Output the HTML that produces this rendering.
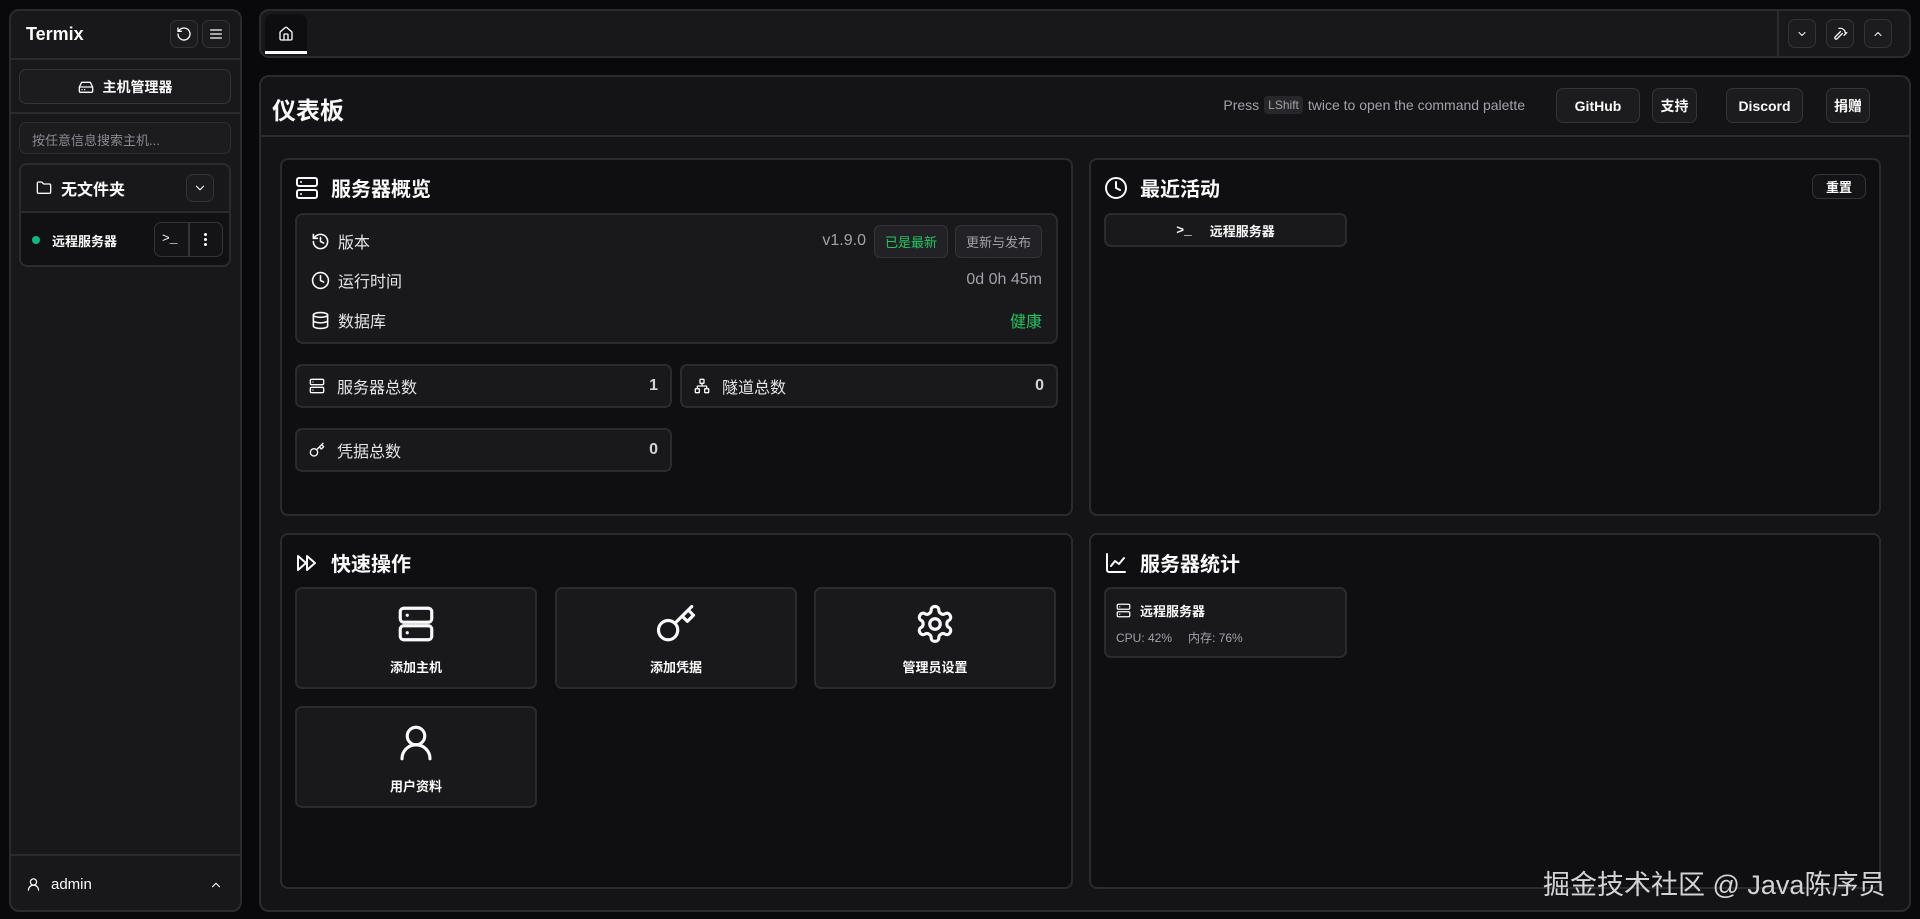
<!DOCTYPE html>
<html><head><meta charset="utf-8"><style>
*{box-sizing:border-box;margin:0;padding:0}
body{width:1920px;height:919px;background:#09090b;font-family:"Liberation Sans","Noto Sans CJK SC",sans-serif;color:#fafafa;position:relative;overflow:hidden}
.a{position:absolute}
.bx{position:absolute;border:2px solid #2b2b2f;border-radius:8px}
.btn{position:absolute;border:1.5px solid #333338;border-radius:7px;background:#1c1c1f;display:flex;align-items:center;justify-content:center;font-weight:700;font-size:14px}
svg{fill:none;stroke:#fafafa;stroke-width:2;stroke-linecap:round;stroke-linejoin:round}
.row{position:absolute;left:14px;right:14px;display:flex;align-items:center;font-size:16px;color:#e4e4e7}
.row svg{width:19px;height:19px;margin-right:8px}
.stat{position:absolute;background:#19191c;border:2px solid #2b2b2f;border-radius:7px;display:flex;align-items:center;padding:0 12px;font-size:16px;color:#e4e4e7}
.stat svg{width:16px;height:16px;margin-right:12px}
.stat b{margin-left:auto;color:#d4d4d8}
.qa{position:absolute;background:#19191c;border:2px solid #2b2b2f;border-radius:7px;width:242px;height:102px;text-align:center;font-size:13px;font-weight:700}
.qa svg{position:absolute;left:50%;top:14px;margin-left:-21px;width:42px;height:42px;stroke-width:1.8}
.qa span{position:absolute;left:0;right:0;top:68px}
.ct{position:absolute;font-size:20px;font-weight:700;display:flex;align-items:center}
.ct svg{width:24px;height:24px;margin-right:12px}
</style></head><body>

<!-- sidebar -->
<div class="bx" style="left:9px;top:9px;width:233px;height:903px;background:#18181b;border-radius:10px"></div>
<div class="a" style="left:26px;top:24px;font-size:18px;font-weight:700">Termix</div>
<div class="btn" style="left:170px;top:20px;width:28px;height:28px"><svg width="16" height="16" viewBox="0 0 24 24"><path d="M3 12a9 9 0 1 0 3-6.7L3 8"/><path d="M3 3v5h5"/></svg></div>
<div class="btn" style="left:202px;top:20px;width:28px;height:28px"><svg width="16" height="16" viewBox="0 0 24 24"><path d="M4 6h16M4 12h16M4 18h16"/></svg></div>
<div class="a" style="left:10px;top:58px;width:231px;height:2px;background:#2b2b2f"></div>
<div class="btn" style="left:19px;top:69px;width:212px;height:35px;font-size:14px"><svg width="16" height="16" viewBox="0 0 24 24" style="margin-right:9px"><path d="M22 12H2M5.5 5h13L22 12v6a2 2 0 0 1-2 2H4a2 2 0 0 1-2-2v-6z"/><path d="M6 16h.01M10 16h.01"/></svg>主机管理器</div>
<div class="a" style="left:10px;top:112px;width:231px;height:2px;background:#2b2b2f"></div>
<div class="a" style="left:19px;top:122px;width:212px;height:32px;border:1.5px solid #2e2e33;border-radius:7px;background:#1c1c1f;font-size:13px;color:#8a8a90;padding:7px 12px">按任意信息搜索主机...</div>
<div class="bx" style="left:19px;top:163px;width:212px;height:104px;background:#18181b"></div>
<div class="a" style="left:36px;top:176px;font-size:16px;font-weight:700;display:flex;align-items:center"><svg width="16" height="16" viewBox="0 0 24 24" style="margin-right:9px"><path d="M20 20a2 2 0 0 0 2-2V8a2 2 0 0 0-2-2h-7.9a2 2 0 0 1-1.7-.9l-.8-1.2A2 2 0 0 0 7.9 3H4a2 2 0 0 0-2 2v13a2 2 0 0 0 2 2z"/></svg>无文件夹</div>
<div class="btn" style="left:186px;top:174px;width:28px;height:28px"><svg width="14" height="14" viewBox="0 0 24 24"><path d="M6 9l6 6 6-6"/></svg></div>
<div class="a" style="left:21px;top:211px;width:208px;height:54px;background:#111113;border-top:2px solid #2b2b2f;border-radius:0 0 7px 7px"></div>
<div class="a" style="left:32px;top:236px;width:8px;height:8px;border-radius:50%;background:#10b981"></div>
<div class="a" style="left:52px;top:231px;font-size:13px;font-weight:700">远程服务器</div>
<div class="a" style="left:154px;top:222px;width:69px;height:35px;border:1.5px solid #333338;border-radius:7px;background:#141416"></div>
<div class="a" style="left:188px;top:223px;width:1.5px;height:33px;background:#333338"></div>
<div class="a" style="left:162px;top:231px;font-size:13px;font-family:'Liberation Mono',monospace">&gt;_</div>
<div class="a" style="left:204px;top:233px;width:3px;height:3px;background:#fff;border-radius:50%;box-shadow:0 5px 0 #fff,0 10px 0 #fff"></div>
<div class="a" style="left:10px;top:854px;width:231px;height:2px;background:#2b2b2f"></div>
<div class="a" style="left:26px;top:876px;font-size:15px;display:flex;align-items:center"><svg width="15" height="15" viewBox="0 0 24 24" style="margin-right:10px"><circle cx="12" cy="8" r="5"/><path d="M20 21a8 8 0 0 0-16 0"/></svg>admin</div>
<svg class="a" style="left:209px;top:878px" width="14" height="14" viewBox="0 0 24 24"><path d="M18 15l-6-6-6 6"/></svg>

<!-- tab bar -->
<div class="bx" style="left:259px;top:9px;width:1652px;height:49px;background:#18181b;border-radius:10px"></div>
<div class="a" style="left:265px;top:14px;width:42px;height:40px;background:#0e0e10;border-radius:8px 8px 0 0;border-bottom:3px solid #fafafa"></div>
<svg class="a" style="left:278px;top:26px" width="16" height="16" viewBox="0 0 24 24"><path d="M15 21v-8a1 1 0 0 0-1-1h-4a1 1 0 0 0-1 1v8"/><path d="M3 10a2 2 0 0 1 .7-1.5l7-6a2 2 0 0 1 2.6 0l7 6A2 2 0 0 1 21 10v9a2 2 0 0 1-2 2H5a2 2 0 0 1-2-2z"/></svg>
<div class="a" style="left:1777px;top:10px;width:2px;height:47px;background:#2b2b2f"></div>
<div class="btn" style="left:1788px;top:19px;width:28px;height:29px"><svg width="12" height="12" viewBox="0 0 24 24"><path d="M6 9l6 6 6-6"/></svg></div>
<div class="btn" style="left:1826px;top:19px;width:28px;height:29px"><svg width="15" height="15" viewBox="0 0 24 24"><path d="M15 12l-8.4 8.4a2.1 2.1 0 0 1-3-3L12 9"/><path d="M17.6 15L22 10.6M20.9 11.8l-1.2-1.2a2 2 0 0 1-.6-1.4V7.9l-2.4-2.4a6 6 0 0 0-4.2-1.8H9.4"/></svg></div>
<div class="btn" style="left:1864px;top:19px;width:28px;height:29px"><svg width="12" height="12" viewBox="0 0 24 24"><path d="M18 15l-6-6-6 6"/></svg></div>

<!-- main panel -->
<div class="bx" style="left:259px;top:75px;width:1652px;height:837px;background:#141416;border-radius:10px"></div>
<div class="a" style="left:272px;top:91px;font-size:24px;font-weight:700">仪表板</div>
<div class="a" style="left:260px;top:135px;width:1650px;height:2px;background:#2b2b2f"></div>
<div class="a" style="left:1202px;top:96px;width:323px;font-size:14px;color:#a1a1aa;display:flex;align-items:center;justify-content:flex-end;white-space:nowrap">Press<span style="background:#27272a;border-radius:4px;padding:2px 4px;margin:0 5px;font-size:12px">LShift</span>twice to open the command palette</div>
<div class="btn" style="left:1556px;top:88px;width:84px;height:35px">GitHub</div>
<div class="btn" style="left:1652px;top:88px;width:45px;height:35px">支持</div>
<div class="btn" style="left:1726px;top:88px;width:77px;height:35px">Discord</div>
<div class="btn" style="left:1826px;top:88px;width:44px;height:35px">捐赠</div>

<!-- overview card -->
<div class="bx" style="left:280px;top:158px;width:793px;height:358px;background:#0f0f11"></div>
<div class="ct" style="left:295px;top:173px"><svg viewBox="0 0 24 24"><rect x="2" y="2" width="20" height="8" rx="2"/><rect x="2" y="14" width="20" height="8" rx="2"/><path d="M6 6h.01M6 18h.01"/></svg>服务器概览</div>
<div class="a" style="left:295px;top:213px;width:763px;height:131px;background:#19191c;border:2px solid #2b2b2f;border-radius:8px">
 <div class="row" style="top:11px;height:30px"><svg viewBox="0 0 24 24"><path d="M3 12a9 9 0 1 0 9-9 9.8 9.8 0 0 0-6.7 2.7L3 8"/><path d="M3 3v5h5M12 7v5l4 2"/></svg>版本
  <span style="margin-left:auto;color:#a1a1aa">v1.9.0</span>
  <span style="margin-left:8px;border:1.5px solid #333338;border-radius:6px;background:#222226;color:#22c55e;font-size:13px;padding:6px 10px">已是最新</span>
  <span style="margin-left:7px;border:1.5px solid #333338;border-radius:6px;background:#222226;color:#a1a1aa;font-size:13px;padding:6px 10px">更新与发布</span></div>
 <div class="row" style="top:50px;height:30px"><svg viewBox="0 0 24 24"><circle cx="12" cy="12" r="10"/><path d="M12 6v6l4 2"/></svg>运行时间<span style="margin-left:auto;color:#a1a1aa">0d 0h 45m</span></div>
 <div class="row" style="top:90px;height:30px"><svg viewBox="0 0 24 24"><ellipse cx="12" cy="5" rx="9" ry="3"/><path d="M3 5v14a9 3 0 0 0 18 0V5M3 12a9 3 0 0 0 18 0"/></svg>数据库<span style="margin-left:auto;color:#22c55e">健康</span></div>
</div>
<div class="stat" style="left:295px;top:364px;width:377px;height:44px"><svg viewBox="0 0 24 24"><rect x="2" y="2" width="20" height="8" rx="2"/><rect x="2" y="14" width="20" height="8" rx="2"/><path d="M6 6h.01M6 18h.01"/></svg>服务器总数<b>1</b></div>
<div class="stat" style="left:680px;top:364px;width:378px;height:44px"><svg viewBox="0 0 24 24"><rect x="16" y="16" width="6" height="6" rx="1"/><rect x="2" y="16" width="6" height="6" rx="1"/><rect x="9" y="2" width="6" height="6" rx="1"/><path d="M5 16v-3a1 1 0 0 1 1-1h12a1 1 0 0 1 1 1v3M12 12V8"/></svg>隧道总数<b>0</b></div>
<div class="stat" style="left:295px;top:428px;width:377px;height:44px"><svg viewBox="0 0 24 24"><circle cx="7.5" cy="15.5" r="5.5"/><path d="M21 2l-9.6 9.6M15.5 7.5l3 3L22 7l-3-3"/></svg>凭据总数<b>0</b></div>

<!-- recent activity -->
<div class="bx" style="left:1089px;top:158px;width:792px;height:358px;background:#0f0f11"></div>
<div class="ct" style="left:1104px;top:173px"><svg viewBox="0 0 24 24"><circle cx="12" cy="12" r="10"/><path d="M12 6v6l4 2"/></svg>最近活动</div>
<div class="btn" style="left:1812px;top:174px;width:54px;height:25px;font-size:13px;background:#141416">重置</div>
<div class="a" style="left:1104px;top:213px;width:243px;height:34px;background:#19191c;border:2px solid #2b2b2f;border-radius:7px;font-size:13px;font-weight:700;display:flex;align-items:center;justify-content:center"><span style="font-family:'Liberation Mono',monospace;margin-right:18px">&gt;_</span>远程服务器</div>

<!-- quick ops -->
<div class="bx" style="left:280px;top:533px;width:793px;height:356px;background:#0f0f11"></div>
<div class="ct" style="left:295px;top:548px"><svg viewBox="0 0 24 24"><path d="M3 5v14l8-7zM12 5v14l8-7z"/></svg>快速操作</div>
<div class="qa" style="left:295px;top:587px"><svg viewBox="0 0 24 24"><rect x="3" y="3" width="18" height="8" rx="2"/><rect x="3" y="13" width="18" height="8" rx="2"/><path d="M7 7h.01M7 17h.01"/></svg><span>添加主机</span></div>
<div class="qa" style="left:555px;top:587px"><svg viewBox="0 0 24 24"><circle cx="7.5" cy="15.5" r="5.5"/><path d="M21 2l-9.6 9.6M15.5 7.5l3 3L22 7l-3-3"/></svg><span>添加凭据</span></div>
<div class="qa" style="left:814px;top:587px"><svg viewBox="0 0 24 24"><path d="M12.2 2h-.4a2 2 0 0 0-2 2v.2a2 2 0 0 1-1 1.7l-.4.3a2 2 0 0 1-2 0l-.2-.1a2 2 0 0 0-2.7.7l-.2.4a2 2 0 0 0 .7 2.7l.2.1a2 2 0 0 1 1 1.7v.5a2 2 0 0 1-1 1.7l-.2.1a2 2 0 0 0-.7 2.7l.2.4a2 2 0 0 0 2.7.7l.2-.1a2 2 0 0 1 2 0l.4.3a2 2 0 0 1 1 1.7v.2a2 2 0 0 0 2 2h.4a2 2 0 0 0 2-2v-.2a2 2 0 0 1 1-1.7l.4-.3a2 2 0 0 1 2 0l.2.1a2 2 0 0 0 2.7-.7l.2-.4a2 2 0 0 0-.7-2.7l-.2-.1a2 2 0 0 1-1-1.7v-.5a2 2 0 0 1 1-1.7l.2-.1a2 2 0 0 0 .7-2.7l-.2-.4a2 2 0 0 0-2.7-.7l-.2.1a2 2 0 0 1-2 0l-.4-.3a2 2 0 0 1-1-1.7V4a2 2 0 0 0-2-2z"/><circle cx="12" cy="12" r="3"/></svg><span>管理员设置</span></div>
<div class="qa" style="left:295px;top:706px"><svg viewBox="0 0 24 24"><circle cx="12" cy="8" r="5"/><path d="M20 21a8 8 0 0 0-16 0"/></svg><span>用户资料</span></div>

<!-- server stats -->
<div class="bx" style="left:1089px;top:533px;width:792px;height:356px;background:#0f0f11"></div>
<div class="ct" style="left:1104px;top:548px"><svg viewBox="0 0 24 24"><path d="M3 3v16a2 2 0 0 0 2 2h16"/><path d="M7 15l4-5 4 3 5-6"/></svg>服务器统计</div>
<div class="a" style="left:1104px;top:587px;width:243px;height:71px;background:#19191c;border:2px solid #2b2b2f;border-radius:7px">
 <div style="position:absolute;left:10px;top:12px;font-size:13px;font-weight:700;display:flex;align-items:center"><svg width="15" height="15" viewBox="0 0 24 24" style="margin-right:9px"><rect x="2" y="2" width="20" height="8" rx="2"/><rect x="2" y="14" width="20" height="8" rx="2"/><path d="M6 6h.01M6 18h.01"/></svg>远程服务器</div>
 <div style="position:absolute;left:10px;top:40px;font-size:12px;color:#a1a1aa">CPU: 42%<span style="margin-left:16px">内存: 76%</span></div>
</div>

<div class="a" style="left:1543px;top:863px;font-size:27px;color:#d4d4d8;white-space:nowrap">掘金技术社区 @ Java陈序员</div>
</body></html>
